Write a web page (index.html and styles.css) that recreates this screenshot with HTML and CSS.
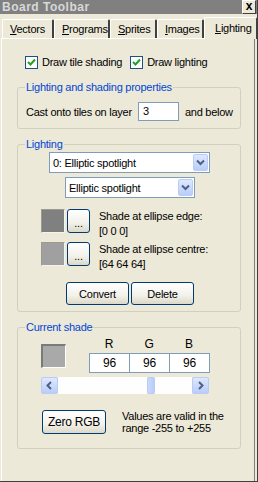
FILE: index.html
```html
<!DOCTYPE html>
<html>
<head>
<meta charset="utf-8">
<link rel="stylesheet" href="styles.css">
</head>
<body>
<div class="window">
  <div class="titlebar">
    <span class="title">Board Toolbar</span>
    <span class="close">x</span>
  </div>
  <div class="tabs">
    <div class="tab"><u>V</u>ectors</div>
    <div class="tab"><u>P</u>rograms</div>
    <div class="tab"><u>S</u>prites</div>
    <div class="tab"><u>I</u>mages</div>
    <div class="tab active"><u>L</u>ighting</div>
  </div>
  <div class="panel">
    <div class="checks">
      <label class="check"><span class="box"><svg width="9" height="9" viewBox="0 0 9 9"><path d="M1 4 L3.5 6.5 L8 1.5" fill="none" stroke="#21a121" stroke-width="2"/></svg></span>Draw tile shading</label>
      <label class="check"><span class="box"><svg width="9" height="9" viewBox="0 0 9 9"><path d="M1 4 L3.5 6.5 L8 1.5" fill="none" stroke="#21a121" stroke-width="2"/></svg></span>Draw lighting</label>
    </div>

    <fieldset class="group g1">
      <legend>Lighting and shading properties</legend>
      <div class="layer-row">
        <span>Cast onto tiles on layer</span>
        <span class="input">3</span>
        <span>and below</span>
      </div>
    </fieldset>

    <fieldset class="group g2">
      <legend>Lighting</legend>
      <div class="combo c1"><span class="ctext">0: Elliptic spotlight</span><span class="carrow"><svg width="9" height="7" viewBox="0 0 9 7"><path d="M1 1.5 L4.5 5 L8 1.5" fill="none" stroke="#4d6185" stroke-width="2"/></svg></span></div>
      <div class="combo c2"><span class="ctext">Elliptic spotlight</span><span class="carrow"><svg width="9" height="7" viewBox="0 0 9 7"><path d="M1 1.5 L4.5 5 L8 1.5" fill="none" stroke="#4d6185" stroke-width="2"/></svg></span></div>
      <div class="shade-row r1">
        <span class="swatch s1"></span>
        <span class="btn dots">...</span>
        <span class="shade-text">Shade at ellipse edge:<br>[0 0 0]</span>
      </div>
      <div class="shade-row r2">
        <span class="swatch s2"></span>
        <span class="btn dots">...</span>
        <span class="shade-text">Shade at ellipse centre:<br>[64 64 64]</span>
      </div>
      <div class="btn-row">
        <span class="btn wide">Convert</span>
        <span class="btn wide">Delete</span>
      </div>
    </fieldset>

    <fieldset class="group g3">
      <legend>Current shade</legend>
      <div class="rgb-area">
        <span class="swatch s3"></span>
        <div class="rgb">
          <div class="rgb-labels"><span>R</span><span>G</span><span>B</span></div>
          <div class="rgb-boxes"><span>96</span><span>96</span><span>96</span></div>
        </div>
      </div>
      <div class="scroll">
        <span class="sbtn"><svg width="7" height="9" viewBox="0 0 7 9"><path d="M5 1 L1.5 4.5 L5 8" fill="none" stroke="#4d6185" stroke-width="2"/></svg></span>
        <span class="track left"></span>
        <span class="thumb"></span>
        <span class="track right"></span>
        <span class="sbtn"><svg width="7" height="9" viewBox="0 0 7 9"><path d="M2 1 L5.5 4.5 L2 8" fill="none" stroke="#4d6185" stroke-width="2"/></svg></span>
      </div>
      <div class="zero-row">
        <span class="btn zero">Zero RGB</span>
        <span class="note">Values are valid in the<br>range -255 to +255</span>
      </div>
    </fieldset>
  </div>
</div>
</body>
</html>
```

FILE: styles.css
```css
* { box-sizing: border-box; }
html, body { margin: 0; padding: 0; background: #ece9d8; }
body {
  font-family: "Liberation Sans", Arial, sans-serif;
  font-size: 11px;
  letter-spacing: -0.25px;
  color: #000;
}
.window {
  width: 258px;
  height: 482px;
  background: #ece9d8;
  display: flex;
  flex-direction: column;
  overflow: hidden;
  border-right: 1px solid #404040;
  border-bottom: 1px solid #404040;
}
.titlebar {
  height: 14px;
  background: #808080;
  display: flex;
  justify-content: space-between;
  align-items: flex-start;
  flex: none;
}
.title {
  color: #d8d8d8;
  font-weight: bold;
  font-size: 12px;
  letter-spacing: 0.5px;
  line-height: 14px;
  padding-left: 2px;
}
.close {
  width: 14px;
  height: 14px;
  margin-right: 1px;
  background: #ece9d8;
  border-top: 1px solid #fff;
  border-left: 1px solid #fff;
  border-right: 1px solid #404040;
  border-bottom: 1px solid #404040;
  font-weight: bold;
  font-size: 12px;
  letter-spacing: 0;
  line-height: 11px;
  text-align: center;
  color: #000;
}
.tabs {
  display: flex;
  align-items: flex-end;
  padding-left: 2px;
  height: 24px;
  flex: none;
  position: relative;
  z-index: 1;
}
.tab {
  height: 19px;
  border-top: 1px solid #fff;
  border-left: 1px solid #fff;
  border-right: 2px solid #404040;
  border-radius: 2px 2px 0 0;
  padding: 2px 5px 0 7px;
  line-height: 14px;
  white-space: nowrap;
}
.tab:nth-child(1) { width: 52px; }
.tab:nth-child(2) { width: 56px; }
.tab:nth-child(3) { width: 47px; }
.tab:nth-child(4) { width: 47px; }
.tab.active {
  width: 53px;
  height: 22px;
  margin-bottom: -1px;
  background: #ece9d8;
  border-right: 1px solid #404040;
  padding: 3px 3px 0 10px;
}
.panel {
  flex: 1;
  border-top: 1px solid #fff;
  border-left: 1px solid #fff;
  border-right: 1px solid #808080;
  margin-left: 1px;
  margin-right: 2px;
  padding: 17px 13px 0 15px;
  display: flex;
  flex-direction: column;
}
.checks {
  display: flex;
  gap: 8px;
  padding-left: 8px;
  height: 13px;
  white-space: nowrap;
}
.check {
  display: flex;
  align-items: center;
  gap: 4px;
  line-height: 13px;
}
.box {
  width: 13px;
  height: 13px;
  border: 1px solid #1c5180;
  background: #fff;
  display: flex;
  align-items: center;
  justify-content: center;
  flex: none;
}
.group {
  margin: 0;
  border: 1px solid #d0d0bf;
  border-radius: 3px;
  padding: 0;
  min-width: 0;
  flex: none;
}
.group legend {
  color: #0046d5;
  padding: 0 1px;
  margin-left: 7px;
  line-height: 13px;
}
.g1 { margin-top: 12px; height: 48px; }
.layer-row {
  display: flex;
  align-items: center;
  margin: 8px 0 0 8px;
  white-space: nowrap;
}
.input {
  width: 41px;
  height: 19px;
  border: 1px solid #7f9db9;
  background: #fff;
  margin: 0 6px 0 6px;
  padding-left: 4px;
  line-height: 17px;
  flex: none;
}
.g2 { margin-top: 9px; height: 174px; }
.combo {
  height: 21px;
  border: 1px solid #7f9db9;
  background: #fff;
  display: flex;
  align-items: center;
  justify-content: space-between;
  padding: 1px;
}
.ctext { padding-left: 2px; }
.carrow {
  width: 15px;
  height: 17px;
  border: 1px solid #b9ccf9;
  border-radius: 2px;
  background: linear-gradient(#dfe8fe, #b9cdf9);
  display: flex;
  align-items: center;
  justify-content: center;
}
.c1 { width: 161px; margin: 1px 0 0 31px; }
.c2 { width: 130px; margin: 4px 0 0 47px; }
.shade-row {
  display: flex;
  align-items: flex-start;
  margin-left: 23px;
  height: 24px;
}
.r1 { margin-top: 11px; }
.r2 { margin-top: 9px; }
.swatch {
  width: 24px;
  height: 24px;
  flex: none;
  border-top: 1px solid #9c9a8e;
  border-left: 1px solid #9c9a8e;
  border-right: 1px solid #f4f3ee;
  border-bottom: 1px solid #f4f3ee;
}
.s1 { background: #808080; }
.s2 { background: #a0a0a0; }
.s3 {
  background: #a9a9a9;
  width: 25px;
  margin-top: 7px;
  border-top: 2px solid #7a7a7a;
  border-left: 2px solid #7a7a7a;
  border-right: 1px solid #fff;
  border-bottom: 1px solid #fff;
}
.btn {
  display: flex;
  align-items: center;
  justify-content: center;
  border: 1px solid #003c74;
  border-radius: 3px;
  background: linear-gradient(#ffffff, #f2f1ea 60%, #dcd8c8);
  flex: none;
}
.dots {
  width: 23px;
  height: 24px;
  margin-left: 2px;
  padding-top: 4px;
}
.shade-text {
  margin-left: 9px;
  line-height: 15px;
  white-space: nowrap;
}
.btn-row {
  display: flex;
  gap: 2px;
  margin: 16px 0 0 48px;
}
.wide { width: 63px; height: 23px; }
.g3 { margin-top: 9px; height: 128px; }
.rgb-area {
  display: flex;
  margin: 3px 0 0 23px;
}
.rgb { margin-left: 23px; }
.rgb-labels {
  display: flex;
  height: 14px;
  line-height: 14px;
  font-size: 12px;
}
.rgb-labels span { width: 40px; text-align: center; }
.rgb-boxes {
  display: flex;
  margin-top: 2px;
  border: 1px solid #7f9db9;
  width: 121px;
  height: 20px;
}
.rgb-boxes span {
  flex: 1;
  text-align: center;
  line-height: 18px;
  background: #fff;
  font-size: 12px;
}
.rgb-boxes span + span { border-left: 1px solid #7f9db9; }
.scroll {
  display: flex;
  height: 17px;
  margin: 4px 0 0 23px;
  width: 168px;
}
.sbtn {
  width: 17px;
  height: 17px;
  border: 1px solid #b9ccf9;
  border-radius: 2px;
  background: linear-gradient(#dfe8fe, #b9cdf9);
  display: flex;
  align-items: center;
  justify-content: center;
  flex: none;
}
.track { background: #fefefe; flex: none; }
.track.left { width: 89px; }
.track.right { width: 37px; }
.thumb {
  width: 8px;
  flex: none;
  border: 1px solid #b9ccf9;
  border-radius: 2px;
  background: linear-gradient(90deg, #cbdafc, #b9cdf9);
}
.zero-row {
  display: flex;
  align-items: flex-start;
  margin: 16px 0 0 24px;
}
.zero {
  width: 64px;
  height: 24px;
  font-size: 12px;
}
.note {
  margin-left: 16px;
  line-height: 12px;
  white-space: nowrap;
}
```
